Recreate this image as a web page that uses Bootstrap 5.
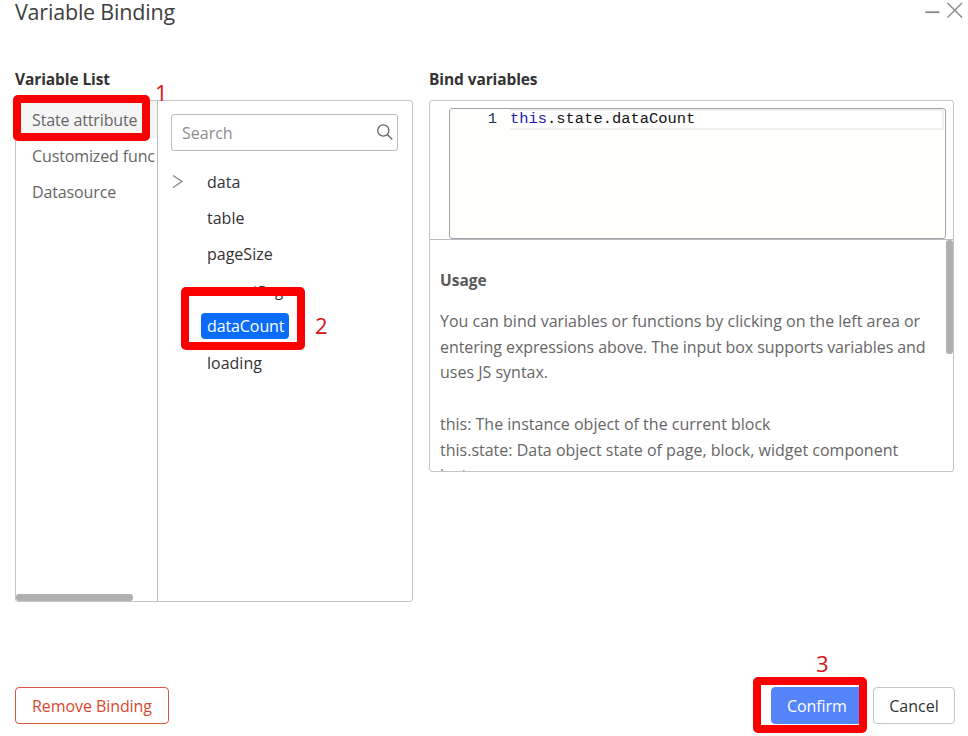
<!DOCTYPE html>
<html lang="en">
<head>
<meta charset="utf-8">
<meta name="viewport" content="width=device-width, initial-scale=1">
<title>Variable Binding</title>
<link href="https://cdn.jsdelivr.net/npm/bootstrap@5.3.0/dist/css/bootstrap.min.css" rel="stylesheet">
<style>
  body { font-family: "Open Sans", "Noto Sans", sans-serif; font-size: 16px; line-height: 24px; color: #333; overflow: hidden; }
  .dialog { width: 968px; height: 736px; padding: 0 13px 12px 15px; }
  .dialog-head { height: 66px; }
  .dialog-title { font-size: 21.5px; line-height: 24px; font-weight: 400; color: #404040; letter-spacing: -.2px; }
  .head-tools { margin-right: -13px; }
  .section-title { font-size: 15.5px; line-height: 26px; font-weight: 700; margin-bottom: 8px; color: #333; letter-spacing: -.1px; }
  .list-col { width: 398px; }
  .bind-col { width: 525px; }
  .panel { border: 1px solid #c4c4c4; border-radius: 3px; }
  .list-panel { height: 502px; }
  .category { width: 142px; border-right: 1px solid #bbb; color: #666; }
  .category-item { height: 36px; line-height: 36px; margin-left: 16px; margin-right: 2px; white-space: nowrap; overflow: hidden; flex-shrink: 0; letter-spacing: -.13px; }
  .category-item.current { height: 37px; line-height: 38px; margin: 0; padding-left: 16px; background: #f5f5f6; }
  .thumb-x { width: 117px; height: 7px; border-radius: 3px; background: #b0b0b0; }
  .tree { padding: 13px 14px 0 13px; }
  .search-box { height: 37px; border: 1px solid #bbb; border-radius: 3px; padding: 0 3px 0 10px; color: #8c8c8c; margin-bottom: 13px; }
  .tree-row { height: 36px; line-height: 36px; }
  .tree-row.lower { line-height: 38px; }
  .tree-row.condensed { font-size: 15px; letter-spacing: -.1px; }
  .twisty { width: 36px; height: 36px; }
  .picked { background: #0a6cf8; color: #fff; border-radius: 4px; height: 26px; line-height: 26px; padding: 0 5px 0 6px; margin-left: -6px; letter-spacing: -.1px; }
  .bind-panel { height: 372px; }
  .editor-wrap { height: 139px; padding: 7px 7px 0 19px; border-bottom: 1px solid #bbb; }
  .editor { height: 131px; border: 1px solid #9fa5ab; border-radius: 3px; background: #fffffc; font: 15.45px/20px "Liberation Mono", monospace; color: #111; }
  .line-no { width: 60px; padding-right: 13px; text-align: right; color: #1c3566; }
  .code-line { height: 21px; border: 2px solid #eee; border-left: 0; background: #fff; line-height: 17px; margin-right: 1px; }
  .kw { color: #22a; }
  .usage { padding: 27px 10px 0; line-height: 25.7px; color: #666; }
  .usage-title { font-size: 15.5px; line-height: 26px; font-weight: 700; color: #595959; margin-bottom: 16px; }
  .tight { letter-spacing: -.08px; }
  .thumb-y { width: 7px; height: 114px; border-radius: 3px; background: #b0b0b0; }
  .btn-dlg { --bs-btn-font-size: 16px; --bs-btn-padding-y: 0; --bs-btn-padding-x: 15px; --bs-btn-border-radius: 4px; height: 37px; }
  .btn-remove { --bs-btn-color: #d8482f; --bs-btn-border-color: #d8583f; width: 154px; letter-spacing: -.08px; }
  .btn-confirm { --bs-btn-color: #fff; --bs-btn-bg: #5584fb; --bs-btn-border-color: #5584fb; width: 91px; margin-right: 11px; letter-spacing: -.1px; }
  .btn-cancel { --bs-btn-color: #333; --bs-btn-border-color: #c4c4c4; width: 82px; }
  .ring { position: absolute; border: 8px solid #fb0000; border-radius: 5px; }
  .ring-1 { left: 13px; top: 95px; width: 137px; height: 46px; }
  .ring-2 { left: 181px; top: 287px; width: 124px; height: 63px; border-top-width: 9px; }
  .ring-3 { left: 753px; top: 677px; width: 114px; height: 56px; }
  .step { position: absolute; color: #d41420; font-size: 22px; line-height: 24px; }
  .step-1 { left: 155px; top: 80px; }
  .step-2 { left: 315px; top: 313px; }
  .step-3 { left: 816px; top: 651px; }
</style>
</head>
<body class="bg-white">
<div class="dialog position-relative d-flex flex-column overflow-hidden">
  <header class="dialog-head d-flex justify-content-between align-items-start">
    <h1 class="dialog-title m-0">Variable Binding</h1>
    <div class="head-tools d-flex">
      <svg width="44" height="24" viewBox="0 0 44 24" fill="none" stroke="#888" stroke-width="1.4"><path d="M1.500 12.200h14" stroke-width="1.800"/><path d="M23.500 3l14.500 14.500M38 3L23.500 17.500"/></svg>
    </div>
  </header>

  <main class="d-flex gap-3">
    <section class="list-col">
      <h2 class="section-title">Variable List</h2>
      <div class="panel list-panel d-flex overflow-hidden">
        <nav class="category d-flex flex-column flex-shrink-0 overflow-hidden">
          <div class="category-item current">State attribute</div>
          <div class="category-item">Customized function</div>
          <div class="category-item">Datasource</div>
          <div class="thumb-x mt-auto"></div>
        </nav>
        <div class="tree flex-grow-1">
          <div class="search-box d-flex align-items-center justify-content-between">
            <span>Search</span>
            <svg width="18" height="18" viewBox="0 0 18 18" fill="none" stroke="#666" stroke-width="1.3"><circle cx="7.300" cy="6.500" r="5.600"/><path d="M11.300 10.500l5 5"/></svg>
          </div>
          <div class="tree-row d-flex">
            <svg class="twisty" viewBox="0 0 36 36" fill="none" stroke="#888" stroke-width="1.3"><path d="M2 11.500l9 6-9 6"/></svg>
            <span>data</span>
          </div>
          <div class="tree-row d-flex"><span class="twisty"></span><span>table</span></div>
          <div class="tree-row d-flex"><span class="twisty"></span><span>pageSize</span></div>
          <div class="tree-row condensed d-flex"><span class="twisty"></span><span>currentPage</span></div>
          <div class="tree-row d-flex align-items-center"><span class="twisty"></span><span class="picked">dataCount</span></div>
          <div class="tree-row lower d-flex"><span class="twisty"></span><span>loading</span></div>
        </div>
      </div>
    </section>

    <section class="bind-col">
      <h2 class="section-title">Bind variables</h2>
      <div class="panel bind-panel d-flex flex-column overflow-hidden">
        <div class="editor-wrap flex-shrink-0">
          <div class="editor d-flex">
            <div class="line-no flex-shrink-0">1</div>
            <div class="code-line flex-grow-1"><span class="kw">this</span>.state.dataCount</div>
          </div>
        </div>
        <div class="d-flex flex-grow-1 overflow-hidden">
          <div class="usage flex-grow-1">
            <h3 class="usage-title">Usage</h3>
            <div class="text-nowrap">You can bind variables or functions by clicking on the left area or<br><span class="tight">entering expressions above. The input box supports variables and</span><br>uses JS syntax.</div>
            <br>
            <div class="text-nowrap">this: The instance object of the current block<br>this.state: Data object state of page, block, widget component<br>instance</div>
          </div>
          <div class="thumb-y flex-shrink-0"></div>
        </div>
      </div>
    </section>
  </main>

  <footer class="d-flex align-items-center mt-auto">
    <button type="button" class="btn btn-dlg btn-remove text-nowrap">Remove Binding</button>
    <button type="button" class="btn btn-dlg btn-confirm ms-auto">Confirm</button>
    <button type="button" class="btn btn-dlg btn-cancel">Cancel</button>
  </footer>

  <div class="ring ring-1"></div><div class="step step-1">1</div>
  <div class="ring ring-2"></div><div class="step step-2">2</div>
  <div class="ring ring-3"></div><div class="step step-3">3</div>
</div>
<script src="https://cdn.jsdelivr.net/npm/bootstrap@5.3.0/dist/js/bootstrap.bundle.min.js"></script>
</body>
</html>
